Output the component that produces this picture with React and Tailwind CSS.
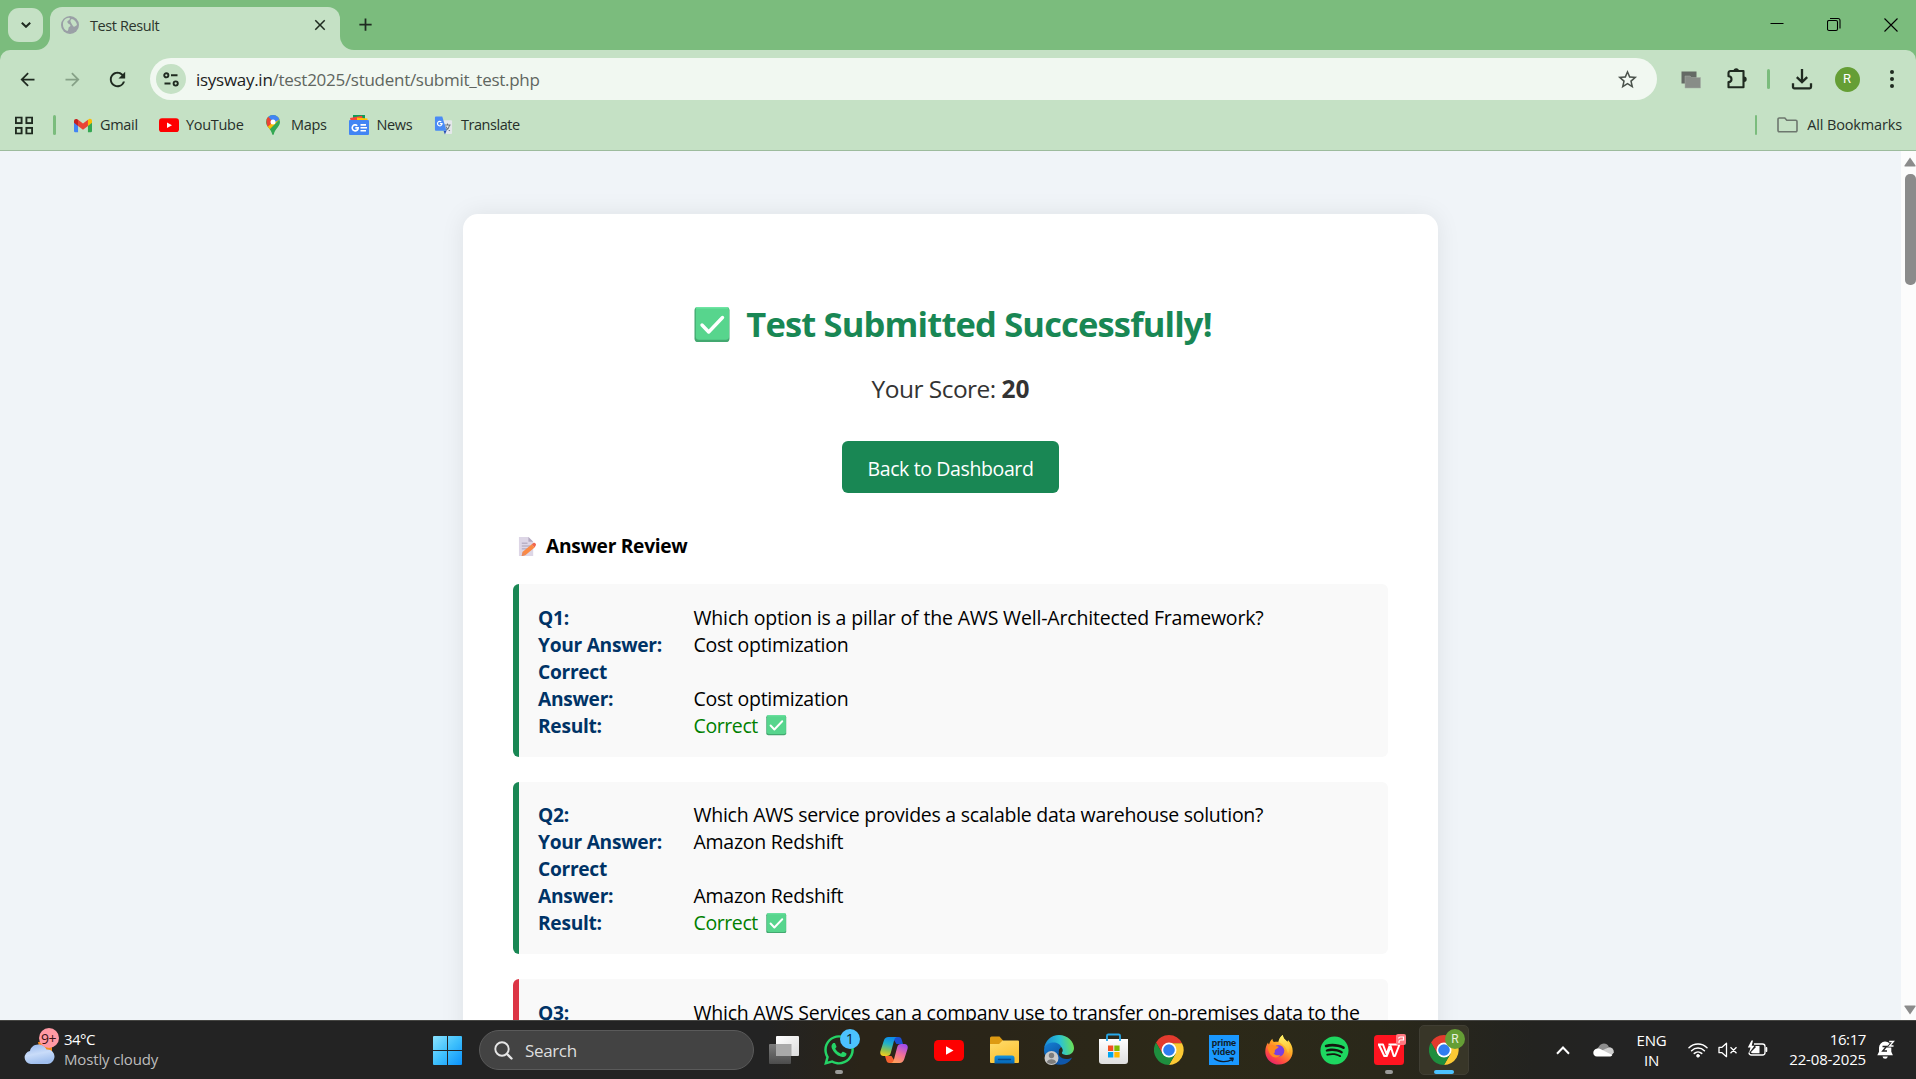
import React from "react";
import { FaWhatsapp, FaSpotify } from "react-icons/fa";
import { MdArrowBack, MdArrowForward, MdRefresh, MdStarOutline, MdClose, MdAdd } from "react-icons/md";

/* ---------- shared drawings ---------- */

function CheckBadge({ className }) {
  return (
    <svg viewBox="0 0 36 36" className={className}>
      <rect x="0.5" y="0.5" width="35" height="35" rx="3.6" fill="#43a870" />
      <rect x="1.8" y="0.5" width="33.2" height="32.8" rx="3.2" fill="#57d58d" />
      <rect x="1.5" y="0.5" width="33" height="1.6" rx="0.8" fill="#6ee5a3" />
      <path d="M8 18.500l6.700 7L28.500 11" fill="none" stroke="#fff" strokeWidth="3.400" strokeLinecap="round" strokeLinejoin="round" />
    </svg>
  );
}

function MemoIcon({ className }) {
  return (
    <svg viewBox="0 0 20 22" className={className}>
      <path d="M1 1h10l5 5v15H1z" fill="#ddd6e6" />
      <path d="M11 1l5 5h-5z" fill="#b3a8c0" />
      <path d="M4 7.5h6M4 10.500h9M4 13.500h6" stroke="#a79db4" strokeWidth="1" />
      <path d="M5 16.500L14.500 8.500l3 3.500L8 20l-4 1z" fill="#fb8a45" />
      <path d="M14.500 8.500l2-1.500c1.500-.5 3 1.500 2.300 2.700L17.500 12z" fill="#f0654d" />
      <path d="M5 16.500l3 3.500-4.200 1z" fill="#e88a5e" />
    </svg>
  );
}

function ChromeLogo({ className }) {
  return (
    <svg viewBox="0 0 48 48" className={className}>
      <path d="M24 0A24 24 0 0 0 3.200 12L13.600 30 24 13h20.800A24 24 0 0 0 24 0z" fill="#e33b2e" />
      <path d="M44.800 13H24l10.400 17L24 48A24 24 0 0 0 44.800 13z" fill="#fcc934" />
      <path d="M3.200 12A24 24 0 0 0 24 48l10.400-18H13.600z" fill="#1e8e3e" />
      <circle cx="24" cy="24" r="12" fill="#fff" />
      <circle cx="24" cy="24" r="9.300" fill="#2f7df0" />
    </svg>
  );
}

function YouTubeLogo({ className }) {
  return (
    <svg viewBox="0 0 30 21" className={className}>
      <rect width="30" height="21" rx="4.500" fill="#fe0000" />
      <path d="M12 6.200l7.500 4.300L12 14.800z" fill="#fff" />
    </svg>
  );
}

/* ---------- browser chrome ---------- */

function GlobeIcon() {
  return (
    <svg viewBox="0 0 18 18" className="size-[18px]">
      <circle cx="9" cy="9" r="9" fill="#9aa0a6" />
      <path d="M2 7.500C2 4.500 5 1.800 8 1.700c1.500 0 1 1.500.2 2.300C7 5 6 5 6.500 6.500S9.500 8 9.500 9.800c0 1-2 .8-2 2.200 0 1.500-.5 3-1.300 3C3.500 14 2 11.500 2 9zM11 3c2.500.8 4.800 3 5 6-1 .5-2.500 2.500-3.500 1.500S9.800 6.500 9.500 5.500 10 2.800 11 3z" fill="#c5e1c5" />
    </svg>
  );
}

function TabStrip() {
  return (
    <div className="flex h-[50px] items-end bg-[#7bbc7d]">
      <div className="relative z-10 mb-2 ml-2 flex h-[34px] w-[35px] items-center justify-center rounded-[11px] bg-[#c5e1c5]">
        <svg viewBox="0 0 10 6" className="h-[6px] w-[10px]">
          <path d="M0.800 0.800L5 4.800L9.200 0.800" fill="none" stroke="#1f2a20" strokeWidth="2" />
        </svg>
      </div>
      <div className="ml-[-8px] size-[15px] bg-[#c5e1c5]">
        <div className="size-full rounded-br-[14px] bg-[#7bbc7d]" />
      </div>
      <div className="flex h-[43px] w-[290px] items-center rounded-t-[12px] bg-[#c5e1c5] pb-[7px] pl-[11px]">
        <GlobeIcon />
        <span className="ml-[11px] translate-y-[0.5px] text-[14.5px] leading-5 tracking-[-0.4px] text-[#2c352d]">Test Result</span>
        <MdClose className="ml-auto mr-[11px] size-[18px] text-[#1f2a20]" />
      </div>
      <div className="size-[15px] bg-[#c5e1c5]">
        <div className="size-full rounded-bl-[14px] bg-[#7bbc7d]" />
      </div>
      <MdAdd className="mb-[15px] size-[21px] text-[#1f2a20]" />
      <div className="mb-[18px] ml-auto mr-[18px] flex items-center gap-[41px] text-black">
        <svg viewBox="0 0 14 14" className="size-[14px]"><path d="M0.500 5.500h13" stroke="currentColor" /></svg>
        <svg viewBox="0 0 14 14" className="ml-[2px] size-[14px] translate-y-[-0.5px]">
          <rect x="0.500" y="3" width="10" height="10" rx="1.500" fill="none" stroke="currentColor" strokeWidth="1.100" />
          <path d="M3 1h8a2 2 0 0 1 2 2v8" fill="none" stroke="currentColor" strokeWidth="1.100" />
        </svg>
        <svg viewBox="0 0 14 14" className="ml-[2px] size-[14px]"><path d="M0.500 0.500l13 13M13.500 0.500l-13 13" stroke="currentColor" strokeWidth="1.100" /></svg>
      </div>
    </div>
  );
}

function TuneIcon() {
  return (
    <svg viewBox="0 0 16 15" className="h-[15px] w-[16px]" fill="none" stroke="#1f2a20" strokeWidth="1.900">
      <circle cx="3.300" cy="3.300" r="2.100" />
      <path d="M8 3.300h6.500M1.500 11.500h6" />
      <circle cx="12.700" cy="11.500" r="2.100" />
    </svg>
  );
}

function Toolbar() {
  return (
    <div className="flex h-[58px] items-center pr-[17px] text-[#1f2a20]">
      <MdArrowBack className="ml-[17px] size-[21px]" />
      <MdArrowForward className="ml-[24px] size-[21px] text-[#86a187]" />
      <MdRefresh className="ml-[23px] size-[23px]" />
      <div className="ml-[21px] flex h-[42px] w-[1507px] items-center rounded-full bg-[#f1f8f1] pl-[6px] pr-[18px]">
        <div className="flex size-[30px] items-center justify-center rounded-full bg-[#c5e1c5]">
          <TuneIcon />
        </div>
        <span className="ml-[10px] translate-y-[0.5px] text-[17px] leading-6 tracking-[-0.28px] text-[#5f6660]">
          <span className="text-[#1c211d]">isysway.in</span>/test2025/student/submit_test.php
        </span>
        <MdStarOutline className="ml-auto size-[23px] text-[#4b534c]" />
      </div>
      <svg viewBox="0 0 20 18" className="ml-[24px] h-[18px] w-[20px] translate-y-px">
        <rect x="0.500" y="0.500" width="15" height="12" fill="#646a65" />
        <path d="M4 5h5l1.500 1.500H19.500V17H4z" fill="#888d88" stroke="#a7aca7" strokeWidth="0.500" />
      </svg>
      <svg viewBox="0 0 22 22" className="ml-[24.500px] size-[22px]">
        <path d="M4.500 3h13v16.300h-15v-5.200c2-.1 3-1.300 3-2.900s-1-2.800-3-2.900V5a2 2 0 0 1 2-2z" fill="none" stroke="currentColor" strokeWidth="2.100" strokeLinejoin="round" />
        <path d="M7.500 3a2.700 2.700 0 0 1 5.400 0zM18 8.500a2.700 2.700 0 0 1 0 5.400z" fill="currentColor" />
      </svg>
      <div className="ml-[19.500px] h-5 w-[2.500px] rounded-full bg-[#7bbc7d]" />
      <svg viewBox="0 0 22 22" className="ml-[21.500px] size-[22px]" fill="none" stroke="currentColor" strokeWidth="2.300">
        <path d="M11 1v13M5.800 9.200L11 14.200l5.200-5M2 15.200V19a1.300 1.300 0 0 0 1.300 1.300h15.400A1.300 1.300 0 0 0 20 19v-3.800" />
      </svg>
      <div className="ml-[21.500px] flex size-[25px] items-center justify-center rounded-full bg-[#659e35] font-[Roboto] text-[13px] text-white">R</div>
      <div className="ml-auto flex w-[14px] flex-col items-center gap-[3px]">
        <div className="size-1 rounded-full bg-current" />
        <div className="size-1 rounded-full bg-current" />
        <div className="size-1 rounded-full bg-current" />
      </div>
    </div>
  );
}

function AppsIcon() {
  return (
    <svg viewBox="0 0 18 18" className="size-[18px]" fill="none" stroke="#1f2a20" strokeWidth="1.900">
      <rect x="0.900" y="0.900" width="5.700" height="5.700" />
      <rect x="11.400" y="0.900" width="5.700" height="5.700" />
      <rect x="0.900" y="11.400" width="5.700" height="5.700" />
      <rect x="11.400" y="11.400" width="5.700" height="5.700" />
    </svg>
  );
}

function GmailLogo() {
  return (
    <svg viewBox="0 0 20 15" className="h-[15px] w-[19px]">
      <path d="M0 3h4.500v12H1.400A1.400 1.400 0 0 1 0 13.600z" fill="#4285f4" />
      <path d="M15.500 3H20v10.600a1.400 1.400 0 0 1-1.400 1.400h-3.100z" fill="#34a853" />
      <path d="M15.500 1l1.300-.7C18.400-.4 20 .8 20 2.400V4.500l-4.500 3.600z" fill="#fbbc04" />
      <path d="M4.500 8.100V1.100L10 5.300l5.500-4.200v7L10 12.300z" fill="#ea4335" />
      <path d="M0 4.500V2.400C0 .8 1.700-.4 3.200.4l1.300.8v6.900z" fill="#c5221f" />
    </svg>
  );
}

function MapsLogo() {
  return (
    <svg viewBox="0 0 14 20" className="h-[20px] w-[14px]">
      <defs>
        <clipPath id="map-pin"><path d="M7 0a7 7 0 0 1 7 7c0 4.500-4.800 6.500-6.200 12.300-.3.900-1.300.9-1.600 0C4.800 13.500 0 11.500 0 7a7 7 0 0 1 7-7z" /></clipPath>
      </defs>
      <g clipPath="url(#map-pin)">
        <rect width="14" height="20" fill="#34a853" />
        <path d="M0 12L11 1l3 3L2 16z" fill="#fbbc04" />
        <path d="M3.500 0H14v4L8 8 1.800 2.500z" fill="#4285f4" />
        <path d="M0 2.500L2 1.500 7 7 1 12.500z" fill="#ea4335" />
      </g>
      <circle cx="7" cy="7" r="2.500" fill="#fff" />
    </svg>
  );
}

function NewsLogo() {
  return (
    <svg viewBox="0 0 20 20" className="size-[20px]">
      <path d="M4 0h12v6H4z" fill="#0c9d58" />
      <path d="M1 3L13 .8l1.500 6H2z" fill="#f4433a" />
      <path d="M8 2.500l10.500 1V8H8z" fill="#ffc107" />
      <rect y="5" width="20" height="15" rx="1" fill="#4285f4" />
      <path d="M8.300 10.700A3 3 0 1 0 9.200 12.900H6.300" fill="none" stroke="#fff" strokeWidth="1.600" />
      <path d="M11.500 9.900h5.500M11.500 12.800h6.500M11.500 15.700H17" stroke="#fff" strokeWidth="1.600" />
    </svg>
  );
}

function TranslateLogo() {
  return (
    <svg viewBox="0 0 19 20" className="h-[19px] w-[19px]">
      <path d="M8 4.500h9.500a1 1 0 0 1 1 1V18a1 1 0 0 1-1 1h-6z" fill="#e4e7ea" />
      <path d="M10.500 9.500h6.500M13.700 8v1.500M16 9.500c-.6 2.800-2.400 4.800-4.300 5.800M11.800 11c1 2 2.600 3.500 4.500 4.500" fill="none" stroke="#6d7781" strokeWidth="1.100" />
      <path d="M9.500 15.500h3.200L11 19.500z" fill="#2b4fb5" />
      <path d="M1.500.5h6.700l4.500 15H1.500a1 1 0 0 1-1-1v-13a1 1 0 0 1 1-1z" fill="#4a8bf5" />
      <path d="M7.200 6.200A2.400 2.400 0 1 0 8 8H5.700" fill="none" stroke="#fff" strokeWidth="1.200" />
    </svg>
  );
}

const bookmarks = [
  { label: "Gmail", icon: <GmailLogo />, iconBox: "w-[18px]", gap: "gap-[8.500px]", box: "w-[85px]", tracking: "tracking-[-0.3px]" },
  { label: "YouTube", icon: <YouTubeLogo className="h-[14.500px] w-[20px]" />, iconBox: "w-[20px]", gap: "gap-[7.500px]", box: "w-[107.5px]", tracking: "tracking-[-0.3px]" },
  { label: "Maps", icon: <MapsLogo />, iconBox: "w-[14px]", gap: "gap-[11px]", box: "w-[82.5px]", tracking: "tracking-[-0.3px]" },
  { label: "News", icon: <NewsLogo />, iconBox: "w-[20px]", gap: "gap-[8px]", box: "w-[85px]", tracking: "tracking-[-0.35px]" },
  { label: "Translate", icon: <TranslateLogo />, iconBox: "w-[19px]", gap: "gap-[8.500px]", box: "w-[90px]", tracking: "tracking-[-0.45px]" },
];

function BookmarksBar() {
  return (
    <div className="flex h-[43px] items-center border-b border-[#9dbb9d] pb-[8px] pr-[14px] text-[14.5px] leading-5 text-[#27302a]">
      <div className="ml-[15px] translate-y-[0.5px]"><AppsIcon /></div>
      <div className="ml-[20px] mr-[18px] h-5 w-[2.500px] rounded-full bg-[#7bbc7d]" />
      {bookmarks.map((b) => (
        <div key={b.label} className={"flex items-center " + b.gap + " " + b.box}>
          <span className={"flex shrink-0 justify-center " + b.iconBox}>{b.icon}</span>
          <span className={"whitespace-nowrap " + b.tracking}>{b.label}</span>
        </div>
      ))}
      <div className="ml-auto h-5 w-[2.500px] rounded-full bg-[#7bbc7d]" />
      <svg viewBox="0 0 21 16" className="ml-[20px] h-[16px] w-[21px]">
        <path d="M1 13.500V2.200A1.200 1.200 0 0 1 2.200 1h5.600l2 2.300h9a1.200 1.200 0 0 1 1.200 1.200v9a1.200 1.200 0 0 1-1.200 1.200H2.200A1.200 1.200 0 0 1 1 13.500z" fill="none" stroke="#6d776e" strokeWidth="1.600" />
      </svg>
      <span className="ml-[9px] tracking-[-0.15px]">All Bookmarks</span>
    </div>
  );
}

/* ---------- page ---------- */

const questions = [
  {
    id: "Q1:",
    text: "Which option is a pillar of the AWS Well-Architected Framework?",
    answer: "Cost optimization",
    correct: true,
    tracking: "tracking-[-0.17px]",
  },
  {
    id: "Q2:",
    text: "Which AWS service provides a scalable data warehouse solution?",
    answer: "Amazon Redshift",
    correct: true,
    tracking: "tracking-[-0.27px]",
  },
  {
    id: "Q3:",
    text: "Which AWS Services can a company use to transfer on-premises data to the",
    answer: "",
    correct: false,
    tracking: "tracking-[-0.25px]",
  },
];

function Field({ label, children }) {
  return (
    <div className="flex items-end">
      <span className="w-[155.5px] shrink-0 pr-6 text-[19.2px] font-bold tracking-[-0.3px] text-[#003366]">{label}</span>
      {children}
    </div>
  );
}

function QuestionCard({ q }) {
  return (
    <div
      className={
        "min-h-[172.5px] rounded-[6px] border-l-[6px] bg-[#f9f9f9] px-[19px] py-[18.750px] " +
        (q.correct ? "border-[#198754]" : "border-[#dc3545]")
      }
    >
      <div className="translate-y-[0.5px] text-[19.5px] leading-[27px] tracking-[-0.26px] text-black">
        <Field label={q.id}>
          <span className={"whitespace-nowrap " + q.tracking}>{q.text}</span>
        </Field>
        {q.correct && (
          <>
            <Field label="Your Answer:"><span>{q.answer}</span></Field>
            <Field label="Correct Answer:"><span>{q.answer}</span></Field>
            <Field label="Result:">
              <span className="flex items-center gap-[8.500px] tracking-[-0.4px] text-[#008000]">
                Correct <CheckBadge className="size-[20.5px] translate-y-[0.5px]" />
              </span>
            </Field>
          </>
        )}
      </div>
    </div>
  );
}

function ResultPage() {
  return (
    <main className="flex h-[869px] overflow-hidden bg-[#f0f4f8]">
      <div className="flex-1 overflow-hidden">
        <div className="mx-auto mt-[63px] h-[1200px] w-[975px] rounded-[15px] bg-white px-[50px] pt-[86px] shadow-[0_0_25px_rgba(0,0,0,0.08)]">
          <h1 className="flex h-12 items-center justify-center pl-[5px] text-[34.5px] font-bold tracking-[-0.84px] text-[#198754]">
            <CheckBadge className="mr-[16px] size-[36px] translate-y-[0.5px]" />
            Test Submitted Successfully!
          </h1>
          <p className="mt-[24px] text-center text-[24.5px] leading-[34px] tracking-[-0.53px] text-[#333333]">
            Your Score: <span className="font-bold tracking-[-0.1px]">20</span>
          </p>
          <div className="mx-auto mt-[35px] flex h-[52px] w-[217px] items-center justify-center rounded-[6px] bg-[#198754] pt-[3px] text-[19.5px] tracking-[-0.38px] text-white">
            Back to Dashboard
          </div>
          <h2 className="mt-[39px] flex h-[28px] items-center gap-[9px] pl-[5px] text-[19.2px] font-bold tracking-[-0.3px] text-black">
            <MemoIcon className="h-[21px] w-[19px]" />
            Answer Review
          </h2>
          <div className="mt-[24px] flex flex-col gap-[25px]">
            {questions.map((q) => <QuestionCard key={q.id} q={q} />)}
          </div>
        </div>
      </div>
      <div className="flex w-[15px] flex-col items-end bg-[#fcfcfc] pt-[6px]">
        <svg viewBox="0 0 12 10" className="h-[10px] w-[12px]"><path d="M6 0.500L11.500 8.500Q12 9.500 11 9.500H1Q0 9.500 0.500 8.500z" fill="#8b8b8b" /></svg>
        <div className="mt-[7px] h-[111px] w-[11px] rounded-[5px] bg-[#8b8b8b]" />
        <svg viewBox="0 0 12 10" className="mb-[5px] mt-auto h-[10px] w-[12px]"><path d="M6 9.500L11.500 1.500Q12 0.500 11 0.500H1Q0 0.500 0.500 1.500z" fill="#8b8b8b" /></svg>
      </div>
    </main>
  );
}

/* ---------- taskbar ---------- */

function WeatherIcon() {
  return (
    <div className="relative h-[27px] w-[34px]">
      <svg viewBox="0 0 34 27" className="h-[27px] w-[34px]">
        <defs>
          <linearGradient id="wcloud" x1="0" y1="0" x2="0.300" y2="1">
            <stop offset="0" stopColor="#94b5ec" /><stop offset="0.550" stopColor="#c9dcf9" /><stop offset="1" stopColor="#a0bfee" />
          </linearGradient>
        </defs>
        <path d="M14 4h14v9H16z" fill="#f58a1e" />
        <path d="M7 26a6.500 6.500 0 0 1-1-12.900C6.500 9 10.500 6 15 6.500c4 .3 6.500 2.500 7.500 5C27 11 30.500 14.500 30.500 18.500S27 26 23.500 26z" fill="url(#wcloud)" />
      </svg>
      <span className="absolute -top-[9.500px] left-[14.5px] flex size-5 items-center justify-center rounded-full bg-[#ff99a4] text-[14px] tracking-[-0.5px] text-[#3b1216]">9+</span>
    </div>
  );
}

function WindowsLogo() {
  return (
    <svg viewBox="0 0 29 29" className="size-[29px]">
      <defs>
        <linearGradient id="win" x1="0" y1="0" x2="1" y2="1">
          <stop offset="0" stopColor="#8be3ff" /><stop offset="0.500" stopColor="#3fc0fc" /><stop offset="1" stopColor="#0a91fb" />
        </linearGradient>
      </defs>
      <path d="M1 0h13v14H0V1a1 1 0 0 1 1-1zM15 0h13a1 1 0 0 1 1 1v13H15zM0 15h14v14H1a1 1 0 0 1-1-1zM15 15h14v13a1 1 0 0 1-1 1H15z" fill="url(#win)" />
    </svg>
  );
}

function TaskViewIcon() {
  return (
    <svg viewBox="0 0 30 28" className="h-[28px] w-[30px]">
      <defs>
        <linearGradient id="tv" x1="0" y1="0" x2="1" y2="1"><stop offset="0" stopColor="#fff" /><stop offset="1" stopColor="#dcdcdc" /></linearGradient>
        <linearGradient id="tvb" x1="0" y1="0" x2="0" y2="1"><stop offset="0" stopColor="#7c7c7c" /><stop offset="1" stopColor="#4c4c4c" /></linearGradient>
      </defs>
      <rect y="8" width="22" height="20" rx="1" fill="url(#tvb)" />
      <rect x="7" width="23" height="20" rx="1" fill="url(#tv)" />
      <path d="M7 8h15.500v12H7z" fill="#a9a9a9" />
    </svg>
  );
}

function CopilotIcon() {
  return (
    <svg viewBox="0 0 28 26" className="h-[26px] w-[28px]">
      <defs>
        <linearGradient id="cpa" x1="0.500" y1="0" x2="0.300" y2="1">
          <stop offset="0" stopColor="#0c8ce9" /><stop offset="0.350" stopColor="#21b1c9" /><stop offset="0.700" stopColor="#8cc152" /><stop offset="1" stopColor="#f5cf1d" />
        </linearGradient>
        <linearGradient id="cpb" x1="0.700" y1="0" x2="0.300" y2="1">
          <stop offset="0" stopColor="#a04bf0" /><stop offset="0.500" stopColor="#ee6f9c" /><stop offset="1" stopColor="#ff9f5a" />
        </linearGradient>
      </defs>
      <path d="M12 0h6.500c2 0 2.800 1.300 3.300 3l1.200 4h-6.500l-4.500-7z" fill="#1b4fd0" />
      <path d="M16 26H9.500c-2 0-2.800-1.300-3.300-3L5 19h6.500l4.500 7z" fill="#f4622f" />
      <path d="M8.500 0H17c-1.800.3-2.600 2-3 3.700l-3.200 12c-.6 2.200-1.700 3.300-4 3.300H3.500C.6 19-.3 16.500.5 14L3.800 3.700C4.600 1.300 6 0 8.500 0z" fill="url(#cpa)" />
      <path d="M19.500 26H11c1.800-.3 2.600-2 3-3.700l3.200-12C17.800 8 18.900 7 21.200 7h3.300c2.900 0 3.800 2.500 3 5l-3.300 10.300c-.8 2.400-2.200 3.700-4.700 3.700z" fill="url(#cpb)" />
    </svg>
  );
}

function FolderIcon() {
  return (
    <svg viewBox="0 0 29 28" className="h-[28px] w-[29px]">
      <defs>
        <linearGradient id="fold" x1="0" y1="0" x2="0.500" y2="1"><stop offset="0" stopColor="#ffdc6c" /><stop offset="1" stopColor="#fbc233" /></linearGradient>
        <linearGradient id="foldb" x1="0" y1="0" x2="0" y2="1"><stop offset="0" stopColor="#1492df" /><stop offset="1" stopColor="#0565b4" /></linearGradient>
      </defs>
      <path d="M0 2a1.500 1.500 0 0 1 1.500-1.500h8L13 4.500v5H0z" fill="#dd9a12" />
      <path d="M0 8h9l3.500-3.500H28a1 1 0 0 1 1 1V26a1 1 0 0 1-1 1H1a1 1 0 0 1-1-1z" fill="url(#fold)" />
      <path d="M7 19.500h15a2.500 2.500 0 0 1 2.500 2.500v5.500h-20V22A2.500 2.500 0 0 1 7 19.500z" fill="url(#foldb)" />
      <path d="M8.500 23.500h12" stroke="#06498a" strokeWidth="1.300" strokeLinecap="round" />
    </svg>
  );
}

function EdgeIcon() {
  return (
    <svg viewBox="0 0 30 30" className="size-[30px]">
      <defs>
        <linearGradient id="ea" x1="0" y1="0.500" x2="1" y2="0.400"><stop offset="0" stopColor="#1784d8" /><stop offset="0.550" stopColor="#2bc3d2" /><stop offset="1" stopColor="#6fe34f" /></linearGradient>
        <linearGradient id="eb" x1="0" y1="0" x2="0.500" y2="1"><stop offset="0" stopColor="#1583d8" /><stop offset="1" stopColor="#0c4fa0" /></linearGradient>
      </defs>
      <path d="M11 10c-6 2-8 9-5 14 3 4.500 9 7 15 5 3.500-1.300 6-4 7-6.500-4 2.500-10 2-12.500-1.500-2-2.800-1.500-6 .5-8z" fill="#0f57ab" />
      <path d="M0 15c.5-6 5-9 9.500-9 6 0 9 4 8.500 6-2.500.5-4 3-3 6-3 2-4 8 1 11.500C7 30.500 0 24 0 15z" fill="url(#eb)" />
      <path d="M0 14C.8 6 7 0 15 0c9 0 15 7 15 13 0 4-3 7-7 7-3 0-5.500-1-5-2.500 1-1.500 1-3 0-4.500C16 8.500 12 7 8.500 7.500 4 8 1 10.500 0 14z" fill="url(#ea)" />
      <circle cx="7.500" cy="23" r="7" fill="#c9c9c9" />
      <circle cx="7.500" cy="20.500" r="2.700" fill="#7d7d7d" />
      <path d="M2.800 27.300c.8-4 8.600-4 9.400 0a7 7 0 0 1-9.400 0z" fill="#7d7d7d" />
    </svg>
  );
}

function StoreIcon() {
  return (
    <svg viewBox="0 0 29 32" className="h-[32px] w-[29px]">
      <defs><linearGradient id="st" x1="0" y1="0" x2="0" y2="1"><stop offset="0" stopColor="#fff" /><stop offset="1" stopColor="#dedede" /></linearGradient></defs>
      <path d="M0 6h29v22a3 3 0 0 1-3 3H3a3 3 0 0 1-3-3z" fill="url(#st)" />
      <path d="M8 8V2.800A1.300 1.300 0 0 1 9.300 1.500h10.400A1.300 1.300 0 0 1 21 2.800V8" fill="none" stroke="#27a8e8" strokeWidth="1.800" />
      <path d="M9 12.500h5.300v5.500H9z" fill="#f25022" /><path d="M15.300 12.500h5.300v5.500h-5.300z" fill="#7fba00" />
      <path d="M9 19h5.300v5.500H9z" fill="#00a4ef" /><path d="M15.300 19h5.300v5.500h-5.300z" fill="#ffb900" />
    </svg>
  );
}

function PrimeIcon() {
  return (
    <div className="flex size-[30px] flex-col items-center bg-[#1a98ff] pt-[3px] font-['Lato'] text-[9.500px] font-black leading-[9px] tracking-[-0.050px] text-[#101c2a]">
      <span>prime</span>
      <span>video</span>
      <svg viewBox="0 0 22 6" className="mt-[1px] h-[6px] w-[22px]">
        <path d="M1 1.200C6 5.500 14 5.500 19 2.500M16.500 1.200h3.500c.3 1-.3 2.200-1 3" fill="none" stroke="#101c2a" strokeWidth="1.400" />
      </svg>
    </div>
  );
}

function FirefoxIcon() {
  return (
    <svg viewBox="0 0 28 30" className="h-[30px] w-[28px]">
      <defs>
        <linearGradient id="fx" x1="0.800" y1="0" x2="0.200" y2="1"><stop offset="0" stopColor="#fff44f" /><stop offset="0.400" stopColor="#ffa726" /><stop offset="0.750" stopColor="#ff4a42" /><stop offset="1" stopColor="#e01a72" /></linearGradient>
        <linearGradient id="fy" x1="0" y1="0" x2="0" y2="1"><stop offset="0" stopColor="#fff36a" /><stop offset="1" stopColor="#ffb62b" /></linearGradient>
      </defs>
      <path d="M14 29.500C6 29.500.3 23.500.3 16.500c0-3.500 1-6.500 2.700-9 .2 1 .5 1.700 1 2C5 6.500 6 5 7.500 3.800c0 1.700.5 2.700 1.500 3.200 1.500-.5 3-.5 4.500 0 .5-3 2-5.500 4.300-7C18 3 20 4.500 22 6.500c.5.500 1-.5 1-1.500 3 3 4.700 7 4.700 11 0 8-6 13.500-13.700 13.500z" fill="url(#fx)" />
      <path d="M13.500 7c.5-3 2-5.500 4.300-7C18 3 20 4.500 22 6.500c3 3 3.500 8 1 12-1-5-4-9-9.500-11.500z" fill="url(#fy)" />
      <circle cx="13.500" cy="15.800" r="5.800" fill="#7a3fe0" />
      <path d="M2.500 12C5 9.500 8 9.500 10 10.800c1 .7 3 .4 3.800 1-.5 1.700-3 1.900-3.800 3.200-.6 1.200.5 3-1.500 3.500 2 2 5 2 7 1.500-3 4-11 4-13-8z" fill="#ff8a1f" />
    </svg>
  );
}

function WpsIcon() {
  return (
    <div className="relative size-[30px]">
      <svg viewBox="0 0 30 30" className="size-[30px]">
        <rect width="30" height="30" rx="3.500" fill="#ff1420" />
        <path d="M4 9.500h5l3.500 9.500 3-8M4.800 9.500L10.300 21h2.400l4-9.500 3 9.500h1.300L25.500 9.500H14.500" fill="none" stroke="#fff" strokeWidth="2" strokeLinejoin="round" />
      </svg>
      <span className="absolute -right-[2px] -top-[1px] flex h-[11px] w-[10px] items-center justify-center rounded-[2px] bg-[#ff7880]">
        <svg viewBox="0 0 8 8" className="size-[8px]" fill="none" stroke="#fff" strokeWidth="1.200"><path d="M1.500 2.500A2 2 0 0 1 3.500 1H6.500v3H4a2 2 0 0 0-2 2v1" /></svg>
      </span>
    </div>
  );
}

const apps = [
  { name: "task-view", icon: <TaskViewIcon /> },
  {
    name: "whatsapp",
    running: true,
    icon: (
      <div className="relative">
        <FaWhatsapp className="size-[34px] text-[#25d366]" />
        <span className="absolute -top-[4px] right-[-4px] flex size-5 items-center justify-center rounded-full bg-[#4cc2ff] text-[14.500px] text-[#0b2433]">1</span>
      </div>
    ),
  },
  { name: "copilot", icon: <CopilotIcon /> },
  { name: "youtube", icon: <YouTubeLogo className="h-[21px] w-[30px]" /> },
  { name: "explorer", icon: <FolderIcon /> },
  { name: "edge", icon: <EdgeIcon /> },
  { name: "store", icon: <div className="-translate-x-px -translate-y-px"><StoreIcon /></div> },
  { name: "chrome", icon: <ChromeLogo className="size-[30px]" /> },
  { name: "prime", icon: <PrimeIcon /> },
  { name: "firefox", icon: <FirefoxIcon /> },
  { name: "spotify", icon: <div className="rounded-full bg-[radial-gradient(circle,#14170f_60%,transparent_62%)]"><FaSpotify className="size-[29px] text-[#1ed760]" /></div> },
  { name: "wps", running: true, icon: <WpsIcon /> },
  {
    name: "chrome-profile",
    active: true,
    icon: (
      <div className="relative">
        <ChromeLogo className="size-[30px]" />
        <span className="absolute -right-[6px] -top-[6px] flex size-5 items-center justify-center rounded-full bg-[#659e35] font-[Roboto] text-[12px] text-[#e8f0dd]">R</span>
      </div>
    ),
  },
];

function TaskbarApp({ app }) {
  return (
    <div className="flex w-[55px] justify-center">
      <div className={"flex h-[50px] w-[50px] flex-col items-center rounded-[5px] " + (app.active ? "border border-[#403e33] bg-[#383628]" : "border border-transparent")}>
        <div className="flex h-[48px] shrink-0 items-center">{app.icon}</div>
        {app.active && <div className="-mt-[4px] h-1 w-5 shrink-0 rounded-full bg-[#4cc2ff]" />}
        {app.running && <div className="-mt-[4px] h-1 w-2 shrink-0 rounded-full bg-[#9a9a98]" />}
      </div>
    </div>
  );
}

function WifiGlyph() {
  return (
    <svg viewBox="0 0 20 16" className="h-[16px] w-[20px]" fill="none" stroke="#fff" strokeWidth="1.500" strokeLinecap="round">
      <path d="M1 5.800a12.800 12.800 0 0 1 18 0M3.600 8.700a9.200 9.200 0 0 1 12.800 0M6.300 11.400a5.400 5.400 0 0 1 7.400 0" />
      <circle cx="10" cy="13.800" r="1.400" fill="#fff" strokeWidth="0.800" />
    </svg>
  );
}

function MutedGlyph() {
  return (
    <svg viewBox="0 0 20 16" className="h-[16px] w-[20px]" fill="none" stroke="#fff" strokeWidth="1.300" strokeLinejoin="round">
      <path d="M1 5.300h3L8.500 1.300v13.400L4 10.700H1zM12.500 5.200l6 6M18.500 5.200l-6 6" />
    </svg>
  );
}

function BatteryGlyph() {
  return (
    <svg viewBox="0 0 21 18" className="h-[18px] w-[21px] -translate-y-px">
      <path d="M7 4h8.500A2.500 2.500 0 0 1 18 6.500v6a2.500 2.500 0 0 1-2.500 2.500h-11A2.500 2.500 0 0 1 2 12.500" fill="none" stroke="#fff" strokeWidth="1.300" />
      <path d="M8 6h4.500v7.200H5.500c-1 0-1.500-.5-1.500-1.200L9 7z" fill="#fff" />
      <path d="M4.500.5L.8 7.500h2.700L2 13l5.500-7.200H4.700L6 .5z" fill="#fff" />
      <path d="M19 7.500h.8v4H19z" stroke="#fff" fill="#fff" />
    </svg>
  );
}

function BellGlyph() {
  return (
    <svg viewBox="0 0 18 20" className="h-[20px] w-[18px]">
      <path d="M8 1.500A6.200 6.200 0 0 0 2 7.700v4L.3 15.200h15.600l-1.600-3.500V7.700A6.200 6.200 0 0 0 8 1.500zM5.500 16.500a2.700 2.700 0 0 0 5.300 0z" fill="#fff" />
      <path d="M5.500 6.500h4L5.700 11H10" fill="none" stroke="#232323" strokeWidth="1.400" />
      <path d="M12 1.500h4.300L12.500 6h4" fill="none" stroke="#232323" strokeWidth="3" />
      <path d="M12.200 1.500h4.300L12.500 6h4" fill="none" stroke="#fff" strokeWidth="1.300" />
    </svg>
  );
}

function Taskbar() {
  return (
    <footer className="flex h-[59px] items-center border-t border-[#454542] bg-[linear-gradient(90deg,#232323_0%,#232323_40%,#2a2418_45%,#2a2518_52%,#2c2918_62%,#2a281a_72%,#232320_80%,#232323_84%)] text-white">
      <div className="ml-[24px] flex w-[409px] items-center">
        <div className="translate-y-px"><WeatherIcon /></div>
        <div className="ml-[6px] translate-y-[-1px] text-[15px] leading-[20px] tracking-[-0.15px]">
          <div className="tracking-[-0.55px]">34°C</div>
          <div className="text-[#bdbdbd]">Mostly cloudy</div>
        </div>
      </div>
      <WindowsLogo />
      <div className="ml-[17px] flex h-[40px] w-[275px] items-center rounded-full border border-[#5a5a5a] bg-[#434343] pl-[14px]">
        <svg viewBox="0 0 19 19" className="size-[19px]" fill="none" stroke="#e6e6e6" strokeLinecap="round">
          <circle cx="8" cy="8" r="6.700" strokeWidth="1.900" />
          <path d="M13 13l4.500 4.500" strokeWidth="2.400" />
        </svg>
        <span className="ml-[12px] translate-y-[0.5px] text-[17px] tracking-[-0.35px] text-[#dedede]">Search</span>
      </div>
      <div className="ml-[2.500px] flex">
        {apps.map((a) => <TaskbarApp key={a.name} app={a} />)}
      </div>
      <div className="ml-auto mr-[21px] flex items-center">
        <svg viewBox="0 0 14 9" className="h-[9px] w-[14px]"><path d="M1 7.800L7 1.500L13 7.800" fill="none" stroke="#fff" strokeWidth="2" /></svg>
        <svg viewBox="0 0 21 14" className="ml-[23px] h-[14px] w-[21px]">
          <path d="M4 8A5 5 0 0 1 6 3.500C8.500-.5 14-.3 15.800 3.800L10 8z" fill="#8d8d8d" />
          <path d="M15.500 4.200a4.800 4.800 0 0 1 5.300 5.300L18 13 9 7.500z" fill="#cfcfcf" />
          <path d="M4 13.500C1.500 13.500.3 11.800.3 9.800c0-2.300 1.500-4 4-4.300 2-.2 3.500.5 4.500 1.200l10.500 5.300c-.7 1-1.600 1.500-3 1.500z" fill="#fff" />
        </svg>
        <div className="ml-[21.500px] w-[32px] translate-y-[-0.5px] text-center text-[15px] leading-[20px] tracking-[-0.2px]">
          <div>ENG</div>
          <div>IN</div>
        </div>
        <div className="ml-[20.500px] flex items-center gap-[9.500px]"><WifiGlyph /><MutedGlyph /><BatteryGlyph /></div>
        <div className="ml-[15px] w-[83px] translate-y-[-1px] text-right text-[15px] leading-[20px] tracking-[-0.15px]">
          <div className="tracking-[-0.4px]">16:17</div>
          <div>22-08-2025</div>
        </div>
        <div className="ml-[11px]"><BellGlyph /></div>
      </div>
    </footer>
  );
}

export default function App() {
  return (
    <div className="flex h-[1079px] w-[1916px] flex-col overflow-hidden font-['Open_Sans','Noto_Sans',sans-serif]">
      <header className="bg-[#7bbc7d]">
        <TabStrip />
        <div className="rounded-t-[10px] bg-[#c5e1c5]">
          <Toolbar />
          <BookmarksBar />
        </div>
      </header>
      <ResultPage />
      <Taskbar />
    </div>
  );
}
